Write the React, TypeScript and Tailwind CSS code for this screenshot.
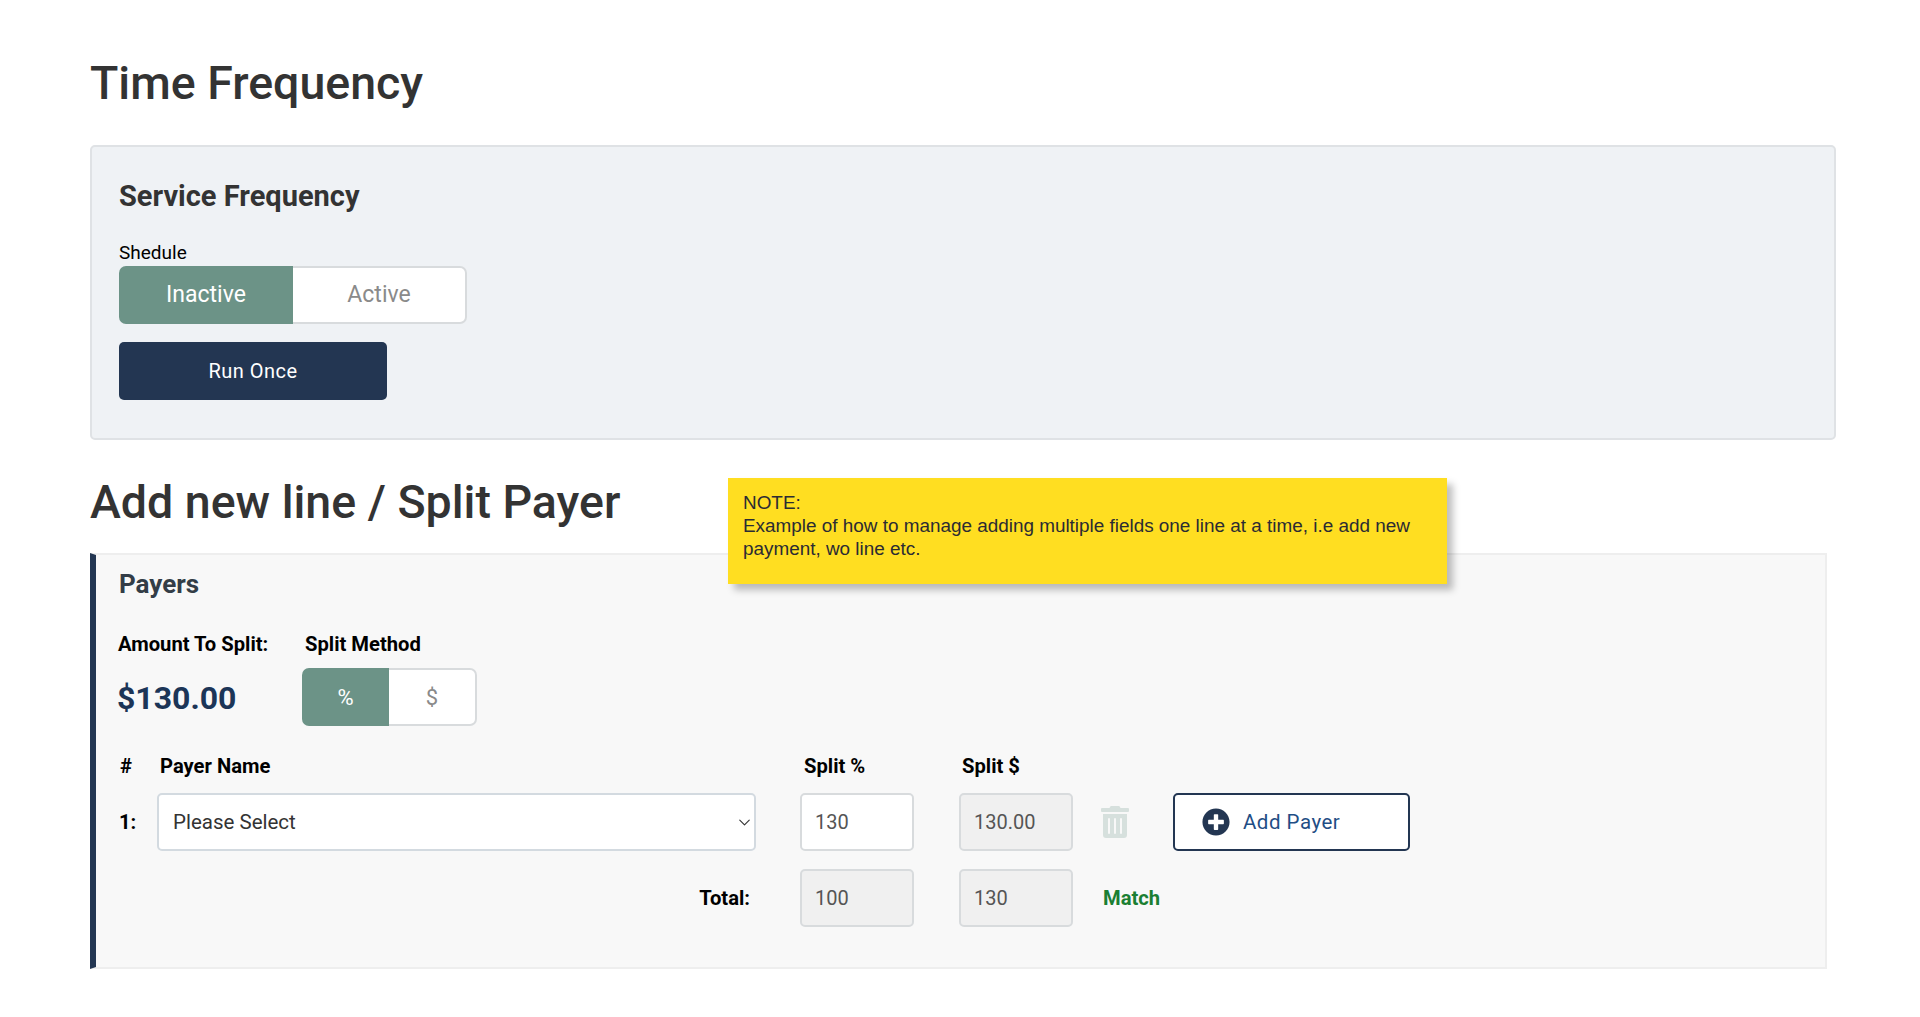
import { ChevronDown } from "lucide-react";
import { FaPlusCircle, FaTrashAlt } from "react-icons/fa";

function Field({ value, disabled }: { value: string; disabled?: boolean }) {
  return (
    <input
      readOnly
      value={value}
      className={`h-[58px] w-[114px] rounded-[5px] border-2 border-[#d8dbdd] px-[13px] text-[20px] text-[#555] outline-none ${
        disabled ? "bg-[#f0f0f0]" : "bg-white"
      }`}
    />
  );
}

function Toggle({
  on,
  off,
  onWidth,
  offWidth,
  small,
}: {
  on: string;
  off: string;
  onWidth: string;
  offWidth: string;
  small?: boolean;
}) {
  return (
    <div className={`flex h-[58px] ${small ? "text-[22px]" : "text-[23px]"}`}>
      <div
        className={`flex items-center justify-center rounded-l-[7px] bg-[#6c9387] text-white ${onWidth}`}
      >
        {on}
      </div>
      <div
        className={`flex items-center justify-center rounded-r-[7px] border-2 border-l-0 border-[#d8dbdd] bg-white text-[#8a8a8a] ${offWidth}`}
      >
        {off}
      </div>
    </div>
  );
}

export default function App() {
  return (
    <div className="relative min-h-[1017px] bg-white pl-[90px] pt-[58px] font-['Roboto',sans-serif]">
      <h1 className="text-[46.5px] leading-[50px] font-medium text-[#333]">
        Time Frequency
      </h1>

      <section className="mt-[37px] h-[295px] w-[1746px] rounded-[5px] border-2 border-[#dfe2e5] bg-[#eff2f5] pl-[27px] pt-[33px]">
        <h2 className="text-[29px] leading-[32px] font-bold text-[#333]">
          Service Frequency
        </h2>
        <div className="mt-[28px] text-[19px] leading-[26px] text-black">
          Shedule
        </div>
        <Toggle on="Inactive" off="Active" onWidth="w-[174px]" offWidth="w-[174px]" />
        <button className="mt-[18px] flex h-[58px] w-[268px] items-center justify-center rounded-[5px] bg-[#233652] text-[20px] tracking-[0.5px] text-white">
          Run Once
        </button>
      </section>

      <h1 className="mt-[37px] text-[46.5px] leading-[50px] font-medium text-[#333]">
        Add new line / Split Payer
      </h1>

      <section className="mt-[26px] h-[416px] w-[1737px] border-y-2 border-r-2 border-l-[6px] border-y-[#eeeeee] border-r-[#eeeeee] border-l-[#233652] bg-[#f8f8f8] pl-[23px] pt-[14px]">
        <h3 className="text-[26px] leading-[30px] font-bold text-[#333d47]">
          Payers
        </h3>

        <div className="mt-[33px] flex">
          <div className="-ml-[1px] w-[184px]">
            <div className="text-[20.2px] leading-[24px] font-bold text-black">
              Amount To Split:
            </div>
            <div className="mt-[13px] -ml-[1px] text-[32px] leading-[58px] font-bold text-[#1c3557]">
              $130.00
            </div>
          </div>
          <div>
            <div className="pl-[3px] text-[20.2px] leading-[24px] font-bold text-black">
              Split Method
            </div>
            <div className="mt-[12px]">
              <Toggle on="%" off="$" onWidth="w-[87px]" offWidth="w-[88px]" small />
            </div>
          </div>
        </div>

        <div className="mt-[27px] flex text-[20.2px] leading-[24px] font-bold text-black">
          <div className="w-[41px] pl-[1px]">#</div>
          <div className="w-[644px]">Payer Name</div>
          <div className="w-[158px]">Split %</div>
          <div>Split $</div>
        </div>

        <div className="mt-[15px] flex items-center">
          <div className="w-[38px] text-[20.2px] font-bold text-black">1:</div>
          <div className="relative w-[599px]">
            <select className="h-[58px] w-full appearance-none rounded-[5px] border-2 border-[#d3dae0] bg-white pl-[14px] text-[20.5px] text-[#333] outline-none">
              <option>Please Select</option>
            </select>
            <ChevronDown
              size={19}
              strokeWidth={1.4}
              className="pointer-events-none absolute right-[2px] top-[20px] text-[#333]"
            />
          </div>
          <div className="ml-[44px]">
            <Field value="130" />
          </div>
          <div className="ml-[45px]">
            <Field value="130.00" disabled />
          </div>
          <FaTrashAlt className="ml-[28px] h-[32px] w-[28px] text-[#d6e0dd]" />
          <button className="ml-[44px] flex h-[58px] w-[237px] items-center rounded-[5px] border-2 border-[#233652] bg-white pl-[27px] text-[20.5px] text-[#1f4e85]">
            <FaPlusCircle className="h-[28px] w-[28px] text-[#233652]" />
            <span className="ml-[13px] tracking-[0.5px]">Add Payer</span>
          </button>
        </div>

        <div className="mt-[18px] flex items-center">
          <div className="w-[631px] text-right text-[20.2px] font-bold text-black">
            Total:
          </div>
          <div className="ml-[50px]">
            <Field value="100" disabled />
          </div>
          <div className="ml-[45px]">
            <Field value="130" disabled />
          </div>
          <div className="ml-[30px] text-[20.2px] font-bold text-[#1b7f33]">
            Match
          </div>
        </div>
      </section>

      <div className="absolute left-[728px] top-[478px] h-[106px] w-[719px] bg-[#ffde21] px-[15px] pt-[13px] font-['Liberation_Sans',sans-serif] text-[18.9px] leading-[23px] text-[#2b2b33] shadow-[6px_6px_7px_rgba(0,0,0,0.25)]">
        NOTE:
        <br />
        Example of how to manage adding multiple fields one line at a time, i.e add new payment, wo line etc.
      </div>
    </div>
  );
}
